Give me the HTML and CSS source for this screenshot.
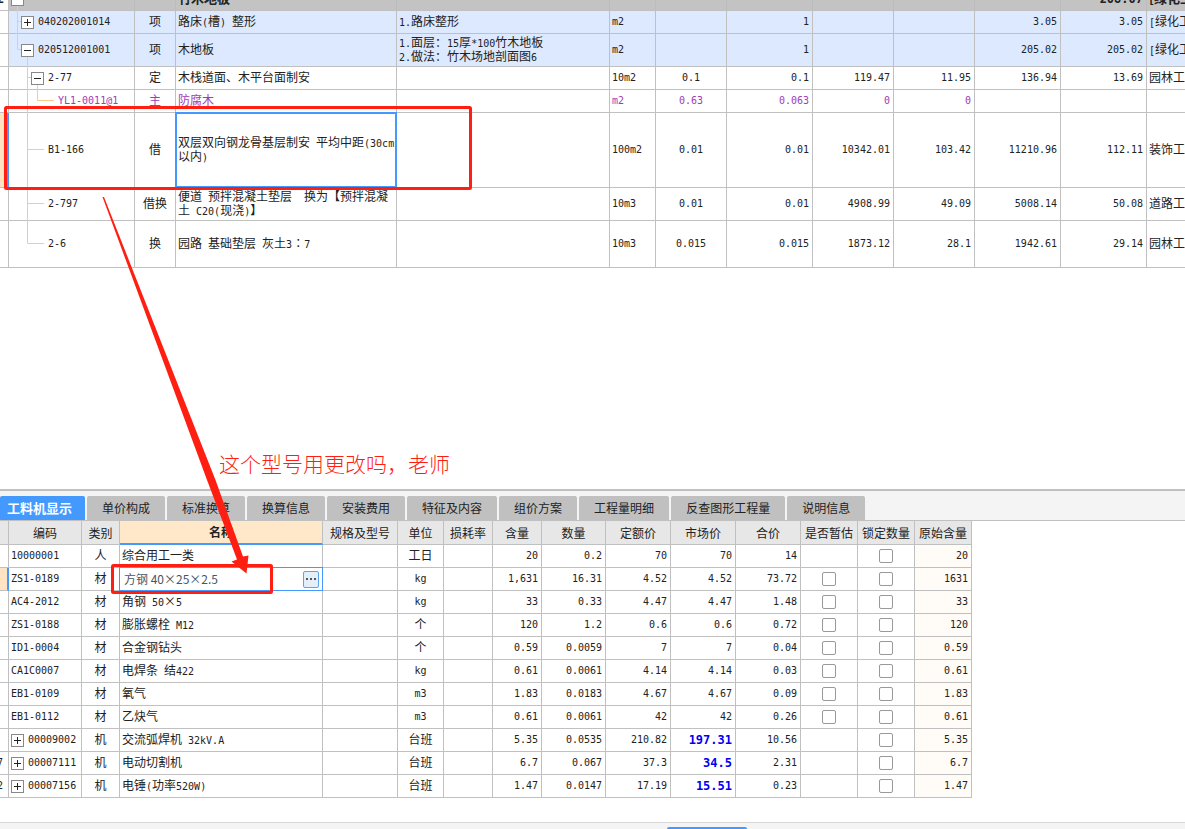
FILE: index.html
```html
<!DOCTYPE html>
<html lang="zh-CN">
<head>
<meta charset="utf-8">
<title>工程计价</title>
<link rel="stylesheet" href="styles.css">
</head>
<body>
<main class="upper">
<table class="grid bill">
<colgroup><col class="w9"><col class="w126"><col class="w41"><col class="w221"><col class="w213"><col class="w46"><col class="w71"><col class="w86"><col class="w81"><col class="w81"><col class="w86"><col class="w86"><col></colgroup>
<tbody>
<tr class="group"><td class="mark m">2</td><td class="tight"><div class="code lv1"><button class="toggle minus" aria-label="折叠"></button></div></td><td></td><td>竹木地板</td><td></td><td></td><td></td><td></td><td></td><td></td><td></td><td class="num">208.07</td><td>[绿化工程</td></tr>
<tr class="item"><td></td><td class="tight"><div class="code lv2"><button class="toggle plus" aria-label="展开"></button>040202001014</div></td><td class="mid">项</td><td>路床<span class="m">(</span>槽<span class="m">) </span>整形</td><td><span class="m">1.</span>路床整形</td><td class="m">m2</td><td></td><td class="num">1</td><td></td><td></td><td class="num">3.05</td><td class="num">3.05</td><td><span class="m">[</span>绿化工程</td></tr>
<tr class="item tall"><td></td><td class="tight"><div class="code lv2"><button class="toggle minus" aria-label="折叠"></button>020512001001</div></td><td class="mid">项</td><td>木地板</td><td><span class="m">1.</span>面层：<span class="m">15</span>厚<span class="m">*100</span>竹木地板<br><span class="m">2.</span>做法：竹木场地剖面图<span class="m">6</span></td><td class="m">m2</td><td></td><td class="num">1</td><td></td><td></td><td class="num">205.02</td><td class="num">205.02</td><td><span class="m">[</span>绿化工程</td></tr>
<tr><td></td><td class="tight"><div class="code lv3"><button class="toggle minus" aria-label="折叠"></button>2-77</div></td><td class="mid">定</td><td>木栈道面、木平台面制安</td><td></td><td class="m">10m2</td><td class="m mid">0.1</td><td class="num">0.1</td><td class="num">119.47</td><td class="num">11.95</td><td class="num">136.94</td><td class="num">13.69</td><td>园林工程</td></tr>
<tr class="material"><td></td><td class="tight"><div class="code leaf2">YL1-0011@1</div></td><td class="mid">主</td><td>防腐木</td><td></td><td class="m">m2</td><td class="m mid">0.63</td><td class="num">0.063</td><td class="num">0</td><td class="num">0</td><td></td><td></td><td></td></tr>
<tr class="huge"><td class="current"></td><td class="tight"><div class="code leaf">B1-166</div></td><td class="mid">借</td><td class="selected">双层双向钢龙骨基层制安<span class="m"> </span>平均中距<span class="m">(30cm</span><br>以内<span class="m">)</span></td><td></td><td class="m">100m2</td><td class="m mid">0.01</td><td class="num">0.01</td><td class="num">10342.01</td><td class="num">103.42</td><td class="num">11210.96</td><td class="num">112.11</td><td>装饰工程</td></tr>
<tr class="tall"><td></td><td class="tight"><div class="code leaf">2-797</div></td><td class="mid">借换</td><td>便道<span class="m"> </span>预拌混凝土垫层<span class="m">  </span>换为【预拌混凝<br>土<span class="m"> C20(</span>现浇<span class="m">)</span>】</td><td></td><td class="m">10m3</td><td class="m mid">0.01</td><td class="num">0.01</td><td class="num">4908.99</td><td class="num">49.09</td><td class="num">5008.14</td><td class="num">50.08</td><td>道路工程</td></tr>
<tr class="big"><td></td><td class="tight"><div class="code leaf">2-6</div></td><td class="mid">换</td><td>园路<span class="m"> </span>基础垫层<span class="m"> </span>灰土<span class="m">3</span>∶<span class="m">7</span></td><td></td><td class="m">10m3</td><td class="m mid">0.015</td><td class="num">0.015</td><td class="num">1873.12</td><td class="num">28.1</td><td class="num">1942.61</td><td class="num">29.14</td><td>园林工程</td></tr>
</tbody>
</table>
<svg class="tree" width="60" height="268" viewBox="0 0 60 268" fill="none" stroke="#fbcb85" aria-hidden="true">
<path d="M17.500 0V49.500H22M17.500 21.500H22M27.500 50V243.500H44M27.500 77.500H32M27.500 149.500H44M27.500 203.500H44M37.500 78V100.500H54"/>
</svg>
</main>

<section class="panel">
<nav class="tabs">
<button class="tab active">工料机显示</button><button class="tab">单价构成</button><button class="tab">标准换算</button><button class="tab">换算信息</button><button class="tab">安装费用</button><button class="tab">特征及内容</button><button class="tab">组价方案</button><button class="tab">工程量明细</button><button class="tab">反查图形工程量</button><button class="tab">说明信息</button>
</nav>
<table class="grid parts">
<colgroup><col class="w9"><col class="w73"><col class="w38"><col class="w203"><col class="w75"><col class="w46"><col class="w49"><col class="w49"><col class="w64"><col class="w65"><col class="w65"><col class="w65"><col class="w57"><col class="w57"><col class="w57"></colgroup>
<thead>
<tr><th></th><th>编码</th><th>类别</th><th class="sorted">名称</th><th>规格及型号</th><th>单位</th><th>损耗率</th><th>含量</th><th>数量</th><th>定额价</th><th>市场价</th><th>合价</th><th>是否暂估</th><th>锁定数量</th><th>原始含量</th></tr>
</thead>
<tbody>
<tr><td></td><td class="m">10000001</td><td class="mid">人</td><td>综合用工一类</td><td></td><td class="mid">工日</td><td></td><td class="num">20</td><td class="num">0.2</td><td class="num">70</td><td class="num">70</td><td class="num">14</td><td></td><td class="tight"><input type="checkbox" aria-label="锁定数量"></td><td class="num orig">20</td></tr>
<tr><td class="current"></td><td class="m">ZS1-0189</td><td class="mid">材</td><td class="editing"><div class="editor"><input type="text" aria-label="名称" value="方钢 40×25×2.5"><button class="more" aria-label="更多"><svg width="12" height="12" viewBox="0 0 12 12" fill="#555"><path d="M1 5h2v2H1zM5 5h2v2H5zM9 5h2v2H9z"/></svg></button></div></td><td></td><td class="m mid">kg</td><td></td><td class="num">1,631</td><td class="num">16.31</td><td class="num">4.52</td><td class="num">4.52</td><td class="num">73.72</td><td class="tight"><input type="checkbox" aria-label="是否暂估"></td><td class="tight"><input type="checkbox" aria-label="锁定数量"></td><td class="num orig">1631</td></tr>
<tr><td></td><td class="m">AC4-2012</td><td class="mid">材</td><td>角钢<span class="m"> 50</span><span class="times">×</span><span class="m">5</span></td><td></td><td class="m mid">kg</td><td></td><td class="num">33</td><td class="num">0.33</td><td class="num">4.47</td><td class="num">4.47</td><td class="num">1.48</td><td class="tight"><input type="checkbox" aria-label="是否暂估"></td><td class="tight"><input type="checkbox" aria-label="锁定数量"></td><td class="num orig">33</td></tr>
<tr><td></td><td class="m">ZS1-0188</td><td class="mid">材</td><td>膨胀螺栓<span class="m"> M12</span></td><td></td><td class="mid">个</td><td></td><td class="num">120</td><td class="num">1.2</td><td class="num">0.6</td><td class="num">0.6</td><td class="num">0.72</td><td class="tight"><input type="checkbox" aria-label="是否暂估"></td><td class="tight"><input type="checkbox" aria-label="锁定数量"></td><td class="num orig">120</td></tr>
<tr><td></td><td class="m">ID1-0004</td><td class="mid">材</td><td>合金钢钻头</td><td></td><td class="mid">个</td><td></td><td class="num">0.59</td><td class="num">0.0059</td><td class="num">7</td><td class="num">7</td><td class="num">0.04</td><td class="tight"><input type="checkbox" aria-label="是否暂估"></td><td class="tight"><input type="checkbox" aria-label="锁定数量"></td><td class="num orig">0.59</td></tr>
<tr><td></td><td class="m">CA1C0007</td><td class="mid">材</td><td>电焊条<span class="m"> </span>结<span class="m">422</span></td><td></td><td class="m mid">kg</td><td></td><td class="num">0.61</td><td class="num">0.0061</td><td class="num">4.14</td><td class="num">4.14</td><td class="num">0.03</td><td class="tight"><input type="checkbox" aria-label="是否暂估"></td><td class="tight"><input type="checkbox" aria-label="锁定数量"></td><td class="num orig">0.61</td></tr>
<tr><td></td><td class="m">EB1-0109</td><td class="mid">材</td><td>氧气</td><td></td><td class="m mid">m3</td><td></td><td class="num">1.83</td><td class="num">0.0183</td><td class="num">4.67</td><td class="num">4.67</td><td class="num">0.09</td><td class="tight"><input type="checkbox" aria-label="是否暂估"></td><td class="tight"><input type="checkbox" aria-label="锁定数量"></td><td class="num orig">1.83</td></tr>
<tr><td></td><td class="m">EB1-0112</td><td class="mid">材</td><td>乙炔气</td><td></td><td class="m mid">m3</td><td></td><td class="num">0.61</td><td class="num">0.0061</td><td class="num">42</td><td class="num">42</td><td class="num">0.26</td><td class="tight"><input type="checkbox" aria-label="是否暂估"></td><td class="tight"><input type="checkbox" aria-label="锁定数量"></td><td class="num orig">0.61</td></tr>
<tr><td></td><td class="tight"><div class="code"><button class="toggle plus" aria-label="展开"></button>00009002</div></td><td class="mid">机</td><td>交流弧焊机<span class="m"> 32kV.A</span></td><td></td><td class="mid">台班</td><td></td><td class="num">5.35</td><td class="num">0.0535</td><td class="num">210.82</td><td class="num changed">197.31</td><td class="num">10.56</td><td></td><td class="tight"><input type="checkbox" aria-label="锁定数量"></td><td class="num orig">5.35</td></tr>
<tr><td class="mark m">7</td><td class="tight"><div class="code"><button class="toggle plus" aria-label="展开"></button>00007111</div></td><td class="mid">机</td><td>电动切割机</td><td></td><td class="mid">台班</td><td></td><td class="num">6.7</td><td class="num">0.067</td><td class="num">37.3</td><td class="num changed">34.5</td><td class="num">2.31</td><td></td><td class="tight"><input type="checkbox" aria-label="锁定数量"></td><td class="num orig">6.7</td></tr>
<tr><td class="mark m">2</td><td class="tight"><div class="code"><button class="toggle plus" aria-label="展开"></button>00007156</div></td><td class="mid">机</td><td>电锤<span class="m">(</span>功率<span class="m">520W)</span></td><td></td><td class="mid">台班</td><td></td><td class="num">1.47</td><td class="num">0.0147</td><td class="num">17.19</td><td class="num changed">15.51</td><td class="num">0.23</td><td></td><td class="tight"><input type="checkbox" aria-label="锁定数量"></td><td class="num orig">1.47</td></tr>
</tbody>
</table>
<div class="footer"><span class="handle"></span></div>
</section>

<p class="note">这个型号用更改吗，老师</p>
<svg class="marks" width="480" height="600" viewBox="0 0 480 600" aria-hidden="true">
<g fill="none" stroke="#ff1f12" stroke-width="3">
<rect x="5.500" y="107.500" width="465" height="81" rx="1"/>
<rect x="112.500" y="565.500" width="159" height="27" rx="1"/>
</g>
<path fill="#ff1f12" d="M102.500 197L104 197L215.500 480L243 556.500L248.500 555.500L246.500 573.500L231.500 561.500L237 559.500L207 480Z"/>
</svg>
</body>
</html>
```

FILE: styles.css
```css
* { box-sizing: border-box; }

body {
  position: relative;
  display: flex;
  flex-direction: column;
  min-height: 100vh;
  margin: 0;
  overflow: hidden;
  background: #fff;
  color: #222;
  font: 12px/14px "Noto Sans CJK SC", sans-serif;
}

button, input { font: inherit; color: inherit; margin: 0; padding: 0; }

.upper { position: relative; flex: 1; overflow: hidden; }

/* Grids */
.grid { border-collapse: separate; border-spacing: 0; table-layout: fixed; }
.grid tr { height: 23px; }
.grid td, .grid th {
  padding: 0 2px 2px;
  border-right: 1px solid #c0c0c0;
  border-bottom: 1px solid #c0c0c0;
  overflow: hidden;
  white-space: pre;
  vertical-align: middle;
  text-align: left;
  font-weight: normal;
}
.grid .mid { text-align: center; }
.m, .num, .code { font-family: "DejaVu Sans Mono", monospace; font-size: 10px; }
span.m { line-height: 0; }
.grid td.m, .grid td.tight { padding-bottom: 0; }
.grid .num { padding: 0 3px 0 0; text-align: right; }
.grid .mark { padding: 0; text-indent: -3px; }
.times { display: inline-block; width: 12px; text-align: center; }

.bill { width: 100%; margin-top: -12px; }
.bill .tall { height: 33px; }
.bill .big { height: 47px; }
.bill .huge { height: 75px; }
.bill td:last-child { border-right: 0; }
.bill .group td { background: #c3c3c3; border-right-color: #bcbcbc; font-size: 13px; font-weight: bold; }
.bill .group .num { font-size: 12px; }
.bill .group td.mark { background: #fff; border-right-color: #c0c0c0; font-size: 12px; }
.bill .item td + td { background: #dde9fe; }
.bill .material { color: #a33bb5; }

.w9 { width: 9px; } .w38 { width: 38px; } .w41 { width: 41px; } .w46 { width: 46px; }
.w49 { width: 49px; } .w57 { width: 57px; } .w64 { width: 64px; } .w65 { width: 65px; }
.w71 { width: 71px; } .w73 { width: 73px; } .w75 { width: 75px; } .w81 { width: 81px; }
.w86 { width: 86px; } .w126 { width: 126px; } .w203 { width: 203px; } .w213 { width: 213px; }
.w221 { width: 221px; }

.grid td.current { background: #ffe3c3; border-right: 2px solid #4499ff; }
.grid td.selected { position: relative; overflow: visible; }
.selected::after { content: ""; position: absolute; inset: -1px; border: 2px solid #4499ff; }

/* Tree column */
.code { display: flex; align-items: center; gap: 4px; }
.lv2 { padding-left: 10px; }
.lv3 { padding-left: 20px; }
.leaf { padding-left: 37px; }
.leaf2 { padding-left: 47px; }
.tree { position: absolute; left: 0; top: 0; }
.toggle {
  position: relative;
  z-index: 1;
  flex: none;
  width: 13px;
  height: 13px;
  border: 1px solid #888;
  background: linear-gradient(#222, #222) center / 7px 1px no-repeat #fff;
}
.toggle.plus {
  background: linear-gradient(#222, #222) center / 7px 1px no-repeat,
    linear-gradient(#222, #222) center / 1px 7px no-repeat #fff;
}

/* Detail panel */
.panel { border-top: 2px solid #c0c0c0; }
.tabs {
  display: flex;
  gap: 2px;
  padding-top: 5px;
  border-bottom: 1px solid #c0c0c0;
  background: #f4f4f4;
}
.tab {
  height: 24px;
  padding: 0 15px;
  border: 0;
  border-radius: 2px 2px 0 0;
  background: #c0c0c0;
  white-space: nowrap;
}
.tab.active { padding: 0 13px 0 7px; background: #4499ff; color: #fff; font-size: 13px; font-weight: bold; }

.parts { width: 972px; }
.parts thead tr { height: 24px; }
.grid th { padding: 0; background: #e7e7e7; text-align: center; }
.grid th.sorted { border-bottom: 2px solid #4499ff; background: #ffe7ca; font-weight: bold; }
.grid .orig { background: #fffbf6; }
.grid .changed { color: #0000f0; font-size: 12px; font-weight: bold; }
.grid td.editing { position: relative; padding: 0; overflow: visible; }
.editor {
  position: absolute;
  inset: -1px;
  display: flex;
  align-items: center;
  padding: 0 3px 0 4px;
  border: 1px solid #4499ff;
  background: #fff;
}
.editor input { flex: 1; min-width: 0; border: 0; outline: 0; background: none; color: #465766; }
.more {
  display: flex;
  align-items: center;
  justify-content: center;
  width: 16px;
  height: 17px;
  border: 1px solid #5aa5ee;
  border-radius: 2px;
  background: #e4effa;
}
input[type="checkbox"] {
  display: block;
  appearance: none;
  width: 14px;
  height: 14px;
  margin: 0 auto;
  border: 1px solid #999;
  border-radius: 2px;
  background: #fff;
}

.footer {
  display: flex;
  justify-content: center;
  align-items: flex-end;
  height: 7px;
  margin-top: 24px;
  padding-left: 228px;
  border-top: 1px solid #d8d8d8;
  background: #f4f4f4;
}
.handle { width: 80px; height: 2px; border-radius: 2px 2px 0 0; background: #4499ff; }

/* Hand-drawn annotation */
.note { position: absolute; left: 219px; top: 449px; margin: 0; color: #ff1f12; font-size: 21px; font-weight: 300; line-height: 28px; }
.marks { position: absolute; left: 0; top: 0; pointer-events: none; }
```
